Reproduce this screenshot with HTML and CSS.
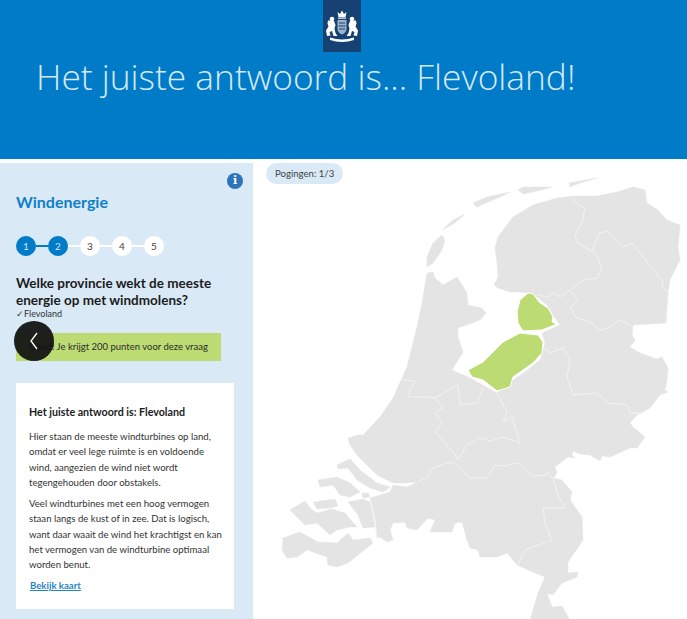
FILE: index.html
```html
<!DOCTYPE html>
<html lang="nl">
<head>
	<title>Windenergie</title>
	<meta charset="UTF-8">
	<link rel="stylesheet" href="styles.css">
</head>
<body>
	<header class="banner">
		<div class="logo">
			<svg width="38" height="52" viewBox="0 0 38 52">
				<g fill="#fff">
					<path d="M15.500 17l-1-5 2.500 2 2-3.500 2 3.500 2.500-2-1 5z"/>
					<rect x="15" y="17.500" width="8" height="1.200"/>
					<path d="M14.500 20h9v8.500q0 4-4.500 6q-4.500-2-4.500-6z" fill="#9fb2ca"/>
					<path d="M16 23h6M15.500 26h7M16 29h6" stroke="#154273" stroke-width="1.200"/>
					<circle cx="9" cy="19" r="2.300"/>
					<circle cx="29" cy="19" r="2.300"/>
					<path d="M6 20.500l5 .5 1.500 4-1 3.500 1 4.500 2 3h-4l-1.500-5-2.500 1 1 3.500-3.500 .5-1-5.500 2.500-4-1-3 .5-3z"/>
					<path d="M32 20.500l-5 .5-1.500 4 1 3.500-1 4.500-2 3h4l1.500-5 2.500 1-1 3.500 3.500 .5 1-5.500-2.500-4 1-3-.5-3z"/>
					<path d="M7 37.500q12 4 24 0v2.500q-12 4-24 0z"/>
				</g>
			</svg>
		</div>
		<h1 class="banner-title">Het juiste antwoord is... Flevoland!</h1>
	</header>

	<main class="content">
		<aside class="panel">
			<div class="panel-top">
				<span class="info">i</span>
			</div>
			<h2 class="panel-title">Windenergie</h2>
			<ol class="steps">
				<li class="step done">1</li>
				<li class="link done"></li>
				<li class="step done">2</li>
				<li class="link"></li>
				<li class="step">3</li>
				<li class="link"></li>
				<li class="step">4</li>
				<li class="link"></li>
				<li class="step">5</li>
			</ol>
			<h3 class="question">Welke provincie wekt de meeste energie op met windmolens?</h3>
			<p class="answer">✓Flevoland</p>
			<p class="result"><b>Goed!</b> Je krijgt 200 punten voor deze vraag</p>
			<section class="card">
				<h4>Het juiste antwoord is: Flevoland</h4>
				<p>Hier staan de meeste windturbines op land, omdat er veel lege ruimte is en voldoende wind, aangezien de wind niet wordt tegengehouden door obstakels.</p>
				<p>Veel windturbines met een hoog vermogen staan langs de kust of in zee. Dat is logisch, want daar waait de wind het krachtigst en kan het vermogen van de windturbine optimaal worden benut.</p>
				<a href="#">Bekijk kaart</a>
			</section>
			<button class="back" aria-label="Terug">
				<svg width="10" height="18" viewBox="0 0 10 18"><path d="M8 1L2 9l6 8" fill="none" stroke="#fff" stroke-width="1.300"/></svg>
			</button>
		</aside>

		<section class="map">
			<span class="tries">Pogingen: 1/3</span>
			<svg class="map-svg" width="434" height="460" viewBox="253 159 434 460">
				<g class="land">
					<path d="M498 237L513 217 533 205 557 198 575 196 597 196 617 192 633 187 645 190 647 203 658 210 667 220 680 225 678 247 680 260 670 280 668 292 666 323 633 325 632 335 635 340 630 347 640 353 657 359 662 357 668 368 667 380 665 390 668 392 660 395 650 408 637 415 630 423 633 427 645 437 637 448 630 448 610 457 602 456 600 461 590 455 580 454 573 451 572 455 575 458 568 457 555 467 557 473 553 478 562 480 572 492 570 500 582 517 583 540 568 562 568 573 578 572 577 577 562 583 553 595 547 593 552 607 562 606 570 620 530 620 538 593 545 577 533 572 517 565 507 553 497 557 480 557 478 550 470 548 467 540 462 522 455 523 452 532 430 532 435 520 428 518 417 530 407 528 405 522 393 523 390 530 393 540 387 542 380 537 377 538 375 520 370 498 390 492 393 485 407 487 418 482 403 483 393 483 377 475 370 468 357 455 350 445 348 438 358 435 363 435 380 417 393 398 407 367 417 327 422 303 427 273 433 272 435 278 443 285 457 277 467 293 468 305 482 308 486 313 480 320 467 325 458 328 458 337 463 352 452 370 470 378 497 393 513 380 525 372 540 360 545 343 542 333 560 325 553 315 547 305 537 297 532 293 520 292 510 292 498 288 494 285 498 277 497 263 495 248z"/>
					<path d="M442 235L445 240 442 250 433 263 427 267 427 257 433 243z"/>
					<path d="M442 230L453 220 465 214 455 223z"/>
					<path d="M473 203L487 197 510 192 500 197 477 207z"/>
					<path d="M518 190L523 187 552 187 537 191 523 194z"/>
					<path d="M569 183L597 178 580 183 570 187z"/>
					<path d="M337 465L350 459 360 470 377 483 390 487 383 492 370 488 357 480 348 468 338 469z"/>
					<path d="M318 480L337 477 350 483 360 492 350 497 340 495 333 485 320 487z"/>
					<path d="M362 493L368 493 370 497 363 498z"/>
					<path d="M290 510L305 501 312 510 317 513 332 509 345 513 357 527 350 527 337 530 330 535 317 523 305 525z"/>
					<path d="M313 502L335 499 338 506 330 508 317 509z"/>
					<path d="M348 502L363 499 370 502 375 527 363 528 358 515z"/>
					<path d="M283 538L300 532 318 542 337 543 348 533 353 540 370 538 373 543 358 555 348 563 337 567 328 565 327 557 307 550 297 557 287 558 282 550z"/>
				</g>
				<g class="borders">
					<path d="M573 198L575 203 585 208 582 223 575 235 577 243 590 250 595 253 602 268 597 278 583 280 573 288 560 297 553 293 547 297 537 295"/>
					<path d="M592 250L600 233 608 231 623 247 632 243 663 282 662 287 668 292"/>
					<path d="M572 292L578 300 571 307 575 317 590 322 600 330 608 328 620 320 630 325"/>
					<path d="M543 347L550 353 563 348 570 360 567 377 573 395 597 393 608 403 627 405 630 413 647 413"/>
					<path d="M497 393L507 412 503 422 512 417 520 443 503 437 490 441 480 438 467 445 458 460 453 452 435 432 442 423 435 413 443 408 435 398 458 385 460 405 477 403 483 387"/>
					<path d="M403 380L415 381 410 390 409 397 425 397 435 398"/>
					<path d="M455 463L447 463 433 468 427 477 418 482"/>
					<path d="M457 465L470 478 487 478 495 465 503 466 518 463 533 476 547 475 548 472 555 483 557 493 565 508 543 508 545 523 552 540 525 550 518 565"/>
					<path d="M370 498L375 520 377 538"/>
				</g>
				<g class="province">
					<path d="M528 293L533 294 540 303 548 308 553 317 552 322 557 324 542 330 523 331 518 323 517 312 520 300z"/>
					<path d="M468 370L483 362 503 342 520 333 538 335 543 342 542 353 533 363 513 377 510 387 497 391 483 380 472 377z"/>
				</g>
			</svg>
		</section>
	</main>
</body>
</html>
```

FILE: styles.css
```css
* {
	margin: 0;
	padding: 0;
	box-sizing: border-box;
}

html, body {
	height: 619px;
	overflow: hidden;
}

body {
	background: #fff;
	font-family: Lato, "Noto Sans", sans-serif;
	color: #222;
}

.banner {
	height: 159px;
	background: #007bc7;
	display: flex;
	flex-direction: column;
	align-items: flex-start;
}

.logo {
	width: 38px;
	height: 52px;
	margin-left: 323px;
	background: #154273;
}

.logo svg {
	display: block;
	filter: blur(0.4px);
}

.banner-title {
	margin: 4px 0 0 36px;
	font-size: 35.300px;
	line-height: 40px;
	font-weight: 300;
	font-family: "Open Sans", sans-serif;
	color: #d6e9f6;
	white-space: nowrap;
}

.content {
	display: flex;
	height: 460px;
	padding-top: 4px;
}

.panel {
	position: relative;
	width: 253px;
	height: 456px;
	background: #d9e9f6;
	padding: 10px 19px 0 16px;
	flex: none;
}

.panel-top {
	display: flex;
	justify-content: flex-end;
	height: 18px;
}

.info {
	width: 16px;
	height: 16px;
	border-radius: 50%;
	background: #2f74b9;
	color: #fff;
	font-family: "DejaVu Serif", serif;
	font-weight: bold;
	font-size: 11px;
	line-height: 16px;
	text-align: center;
	margin-right: -9px;
}

.panel-title {
	font-size: 16px;
	line-height: 22px;
	font-weight: 700;
	color: #0f7fc7;
}

.steps {
	list-style: none;
	display: flex;
	align-items: center;
	margin-top: 23px;
}

.step {
	width: 20px;
	height: 20px;
	border-radius: 50%;
	background: #fff;
	color: #444;
	font-size: 10px;
	line-height: 20px;
	text-align: center;
}

.step.done {
	background: #007bc7;
	color: #cfe6f5;
}

.link {
	width: 12px;
	height: 2px;
	background: #fff;
}

.link.done {
	background: #007bc7;
}

.question {
	margin-top: 19px;
	font-size: 13.500px;
	line-height: 17px;
	font-weight: 700;
	color: #1c1c1c;
}

.answer {
	font-size: 9px;
	line-height: 12px;
	margin-top: -1px;
	color: #333;
}

.result {
	width: 205px;
	height: 28px;
	margin-top: 13px;
	padding-left: 13px;
	background: #bcdc73;
	font-size: 9.500px;
	line-height: 28px;
	color: #2a2a2a;
	white-space: nowrap;
}

.card {
	width: 218px;
	height: 226px;
	margin-top: 22px;
	padding: 22px 8px 0 13px;
	background: #fff;
	font-size: 9.600px;
	line-height: 15.300px;
	color: #333;
}

.card h4 {
	font-size: 10.700px;
	line-height: 14px;
	font-weight: 700;
	color: #1c1c1c;
	margin-bottom: 10px;
}

.card p {
	margin-bottom: 6px;
}

.card a {
	font-weight: 700;
	color: #1f86c9;
	display: block;
	margin: -1px 0 0 1px;
}

.back {
	position: absolute;
	left: 14px;
	top: 158px;
	width: 40px;
	height: 40px;
	border-radius: 50%;
	border: none;
	background: rgba(20, 20, 20, 0.95);
	display: flex;
	align-items: center;
	justify-content: center;
}

.map {
	position: relative;
	flex: 1;
}

.tries {
	position: absolute;
	left: 13px;
	top: 0;
	z-index: 1;
	height: 21px;
	padding: 0 9px;
	border-radius: 11px;
	background: #d9e9f6;
	font-size: 9.600px;
	line-height: 21px;
	color: #444;
}

.map-svg {
	position: absolute;
	left: 0;
	top: -4px;
	display: block;
	filter: blur(0.4px);
}

.land path {
	fill: #e4e4e4;
	stroke: #e4e4e4;
	stroke-width: 0.500;
	stroke-linejoin: round;
}

.borders path {
	fill: none;
	stroke: #f5f5f5;
	stroke-width: 0.800;
	stroke-linejoin: round;
}

.province path {
	fill: #bcdc73;
	stroke: #fff;
	stroke-width: 1;
	stroke-linejoin: round;
}
```
